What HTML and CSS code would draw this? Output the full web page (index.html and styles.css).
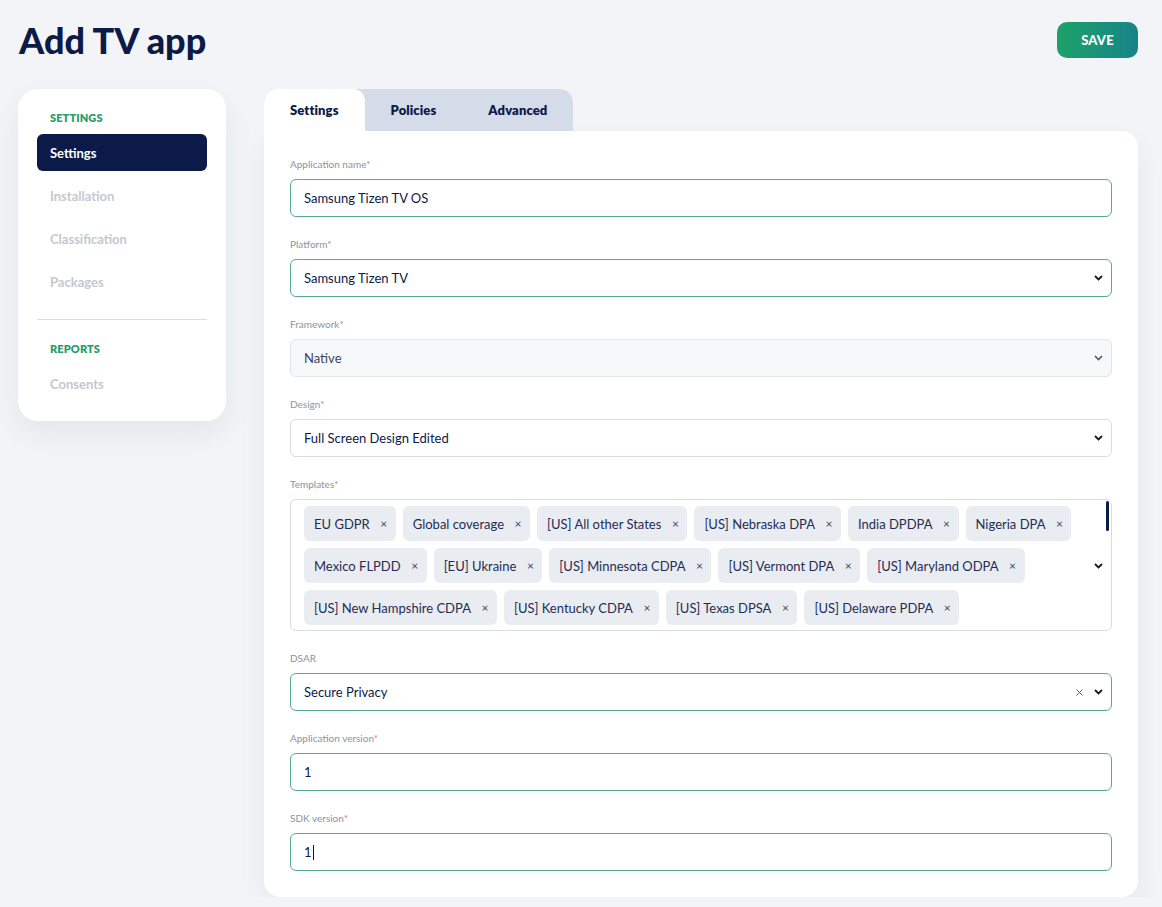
FILE: index.html
```html
<!DOCTYPE html>
<html lang="en">
<head>
  <meta charset="UTF-8">
  <title>Add TV app</title>
  <link rel="stylesheet" href="styles.css">
</head>
<body>

<div class="page">
  <header class="page-header">
    <h1 class="page-title">Add TV app</h1>
    <button class="save-btn">SAVE</button>
  </header>

  <div class="layout">
    <!-- Side navigation -->
    <aside class="side-nav">
      <div class="nav-section">SETTINGS</div>
      <a class="nav-item active">Settings</a>
      <a class="nav-item">Installation</a>
      <a class="nav-item">Classification</a>
      <a class="nav-item">Packages</a>
      <div class="nav-divider"></div>
      <div class="nav-section">REPORTS</div>
      <a class="nav-item">Consents</a>
    </aside>

    <main class="content">
      <div class="tabs">
        <button class="tab active">Settings</button>
        <button class="tab">Policies</button>
        <button class="tab">Advanced</button>
      </div>

      <div class="form-card">
        <div class="field">
          <label class="field-label">Application name<span class="req">*</span></label>
          <div class="control focus">Samsung Tizen TV OS</div>
        </div>

        <div class="field">
          <label class="field-label">Platform<span class="req">*</span></label>
          <div class="control select focus">
            <span class="value">Samsung Tizen TV</span>
            <svg class="chevron" width="9" height="6" viewBox="0 0 9 6"><path d="M1 1l3.5 3.5L8 1" fill="none" stroke="#1b1b1f" stroke-width="1.8"/></svg>
          </div>
        </div>

        <div class="field">
          <label class="field-label">Framework<span class="req">*</span></label>
          <div class="control select disabled">
            <span class="value">Native</span>
            <svg class="chevron" width="9" height="6" viewBox="0 0 9 6"><path d="M1 1l3.5 3.5L8 1" fill="none" stroke="#55575e" stroke-width="1.6"/></svg>
          </div>
        </div>

        <div class="field">
          <label class="field-label">Design<span class="req">*</span></label>
          <div class="control select">
            <span class="value">Full Screen Design Edited</span>
            <svg class="chevron" width="9" height="6" viewBox="0 0 9 6"><path d="M1 1l3.5 3.5L8 1" fill="none" stroke="#1b1b1f" stroke-width="1.8"/></svg>
          </div>
        </div>

        <div class="field">
          <label class="field-label">Templates<span class="req">*</span></label>
          <div class="multi-select">
            <div class="chips">
              <span class="chip">EU GDPR<span class="chip-x">×</span></span>
              <span class="chip">Global coverage<span class="chip-x">×</span></span>
              <span class="chip">[US] All other States<span class="chip-x">×</span></span>
              <span class="chip">[US] Nebraska DPA<span class="chip-x">×</span></span>
              <span class="chip">India DPDPA<span class="chip-x">×</span></span>
              <span class="chip">Nigeria DPA<span class="chip-x">×</span></span>
              <span class="chip">Mexico FLPDD<span class="chip-x">×</span></span>
              <span class="chip">[EU] Ukraine<span class="chip-x">×</span></span>
              <span class="chip">[US] Minnesota CDPA<span class="chip-x">×</span></span>
              <span class="chip">[US] Vermont DPA<span class="chip-x">×</span></span>
              <span class="chip">[US] Maryland ODPA<span class="chip-x">×</span></span>
              <span class="chip">[US] New Hampshire CDPA<span class="chip-x">×</span></span>
              <span class="chip">[US] Kentucky CDPA<span class="chip-x">×</span></span>
              <span class="chip">[US] Texas DPSA<span class="chip-x">×</span></span>
              <span class="chip">[US] Delaware PDPA<span class="chip-x">×</span></span>
            </div>
            <svg class="chevron" width="9" height="6" viewBox="0 0 9 6"><path d="M1 1l3.5 3.5L8 1" fill="none" stroke="#1b1b1f" stroke-width="1.8"/></svg>
            <span class="scroll-thumb"></span>
          </div>
        </div>

        <div class="field">
          <label class="field-label">DSAR</label>
          <div class="control select focus">
            <span class="value">Secure Privacy</span>
            <svg class="clear" width="7" height="7" viewBox="0 0 7 7"><path d="M.5.5l6 6M6.5.5l-6 6" fill="none" stroke="#5b6070" stroke-width="1"/></svg>
            <svg class="chevron" width="9" height="6" viewBox="0 0 9 6"><path d="M1 1l3.5 3.5L8 1" fill="none" stroke="#1b1b1f" stroke-width="1.8"/></svg>
          </div>
        </div>

        <div class="field">
          <label class="field-label">Application version<span class="req">*</span></label>
          <div class="control focus">1</div>
        </div>

        <div class="field">
          <label class="field-label">SDK version<span class="req">*</span></label>
          <div class="control focus">1<span class="caret"></span></div>
        </div>
      </div>
    </main>
  </div>
</div>

</body>
</html>
```

FILE: styles.css
```css
:root {
  --navy: #0b1a47;
  --green: #2a9d6b;
  --focus: #55ad8d;
  --border: #d9dbe2;
  --muted: #c4c8d0;
  --label: #8e929c;
  --chip: #e9ecf1;
  --background: #f2f4f7;
  --surface: #ffffff;
  --font: 'Lato', 'Inter', Arial, sans-serif;
}

body {
  margin: 0;
  background: var(--background);
  color: var(--navy);
  font-family: var(--font);
  font-size: 13px;
}

.page {
  padding: 22px 24px 0 18px;
}

.page-header {
  display: flex;
  align-items: center;
  justify-content: space-between;
}

.page-title {
  margin: 0 0 0 1px;
  font-size: 36px;
  font-weight: 900;
  line-height: 36px;
  color: var(--navy);
}

.save-btn {
  width: 81px;
  height: 36px;
  border: none;
  border-radius: 10px;
  background: linear-gradient(90deg, #1ea168 0%, #17848a 100%);
  color: #fff;
  font-family: var(--font);
  font-weight: 900;
  font-size: 13px;
  letter-spacing: 0.2px;
  cursor: pointer;
}

.layout {
  display: flex;
  align-items: flex-start;
  gap: 38px;
  margin-top: 31px;
}

/* Side navigation */
.side-nav {
  width: 208px;
  box-sizing: border-box;
  flex-shrink: 0;
  background: var(--surface);
  border-radius: 20px;
  padding: 22px 19px 19px;
  box-shadow: 0 12px 30px rgba(30, 40, 70, 0.07);
}

.nav-section {
  margin: 0 0 9px 13px;
  font-size: 11px;
  line-height: 14px;
  font-weight: 800;
  color: var(--green);
  letter-spacing: 0.1px;
}

.nav-item {
  display: flex;
  align-items: center;
  height: 37px;
  padding: 0 13px;
  margin-bottom: 6px;
  border-radius: 6px;
  font-size: 13px;
  font-weight: 700;
  color: var(--muted);
  cursor: pointer;
}
.nav-item:last-child {
  margin-bottom: 0;
}
.nav-item.active {
  background: var(--navy);
  color: #fff;
}

.nav-divider {
  height: 1px;
  background: #d8dbe1;
  margin: 19px 0 22px;
}

/* Content */
.content {
  flex: 1;
}

.tabs {
  display: inline-flex;
  background: #d4dcea;
  border-radius: 14px 14px 0 0;
  vertical-align: top;
}

.tab {
  height: 42px;
  padding: 0 26px;
  border: none;
  background: transparent;
  font-family: var(--font);
  font-size: 13px;
  font-weight: 800;
  letter-spacing: 0.1px;
  color: var(--navy);
  cursor: pointer;
}
.tab.active {
  background: var(--surface);
  border-radius: 14px 12px 0 0;
}

.form-card {
  background: var(--surface);
  border-radius: 0 16px 16px 16px;
  padding: 26px 26px 26px;
  box-shadow: 0 12px 30px rgba(30, 40, 70, 0.06);
}

.field {
  margin-bottom: 20px;
}
.field:last-child {
  margin-bottom: 0;
}

.field-label {
  display: block;
  margin-bottom: 8px;
  font-size: 10px;
  line-height: 14px;
  color: var(--label);
}
.req {
  color: #e0707f;
}

.control {
  display: flex;
  align-items: center;
  height: 38px;
  box-sizing: border-box;
  padding: 0 8px 0 13px;
  border: 1px solid var(--border);
  border-radius: 6px;
  font-size: 13px;
  color: var(--navy);
  background: var(--surface);
}
.control.focus {
  border-color: var(--focus);
}
.control.disabled {
  background: #f7f8fa;
  border-color: #e2e4e9;
  color: #3a4563;
}
.control .value {
  flex: 1;
}
.control .clear {
  margin-right: 11px;
}

.caret {
  display: inline-block;
  width: 1px;
  height: 15px;
  margin-left: 1px;
  background: #111;
}

/* Templates multi select */
.multi-select {
  position: relative;
  display: flex;
  align-items: center;
  box-sizing: border-box;
  padding: 6px 8px 5px 13px;
  border: 1px solid var(--border);
  border-radius: 6px;
}

.chips {
  flex: 1;
  display: flex;
  flex-wrap: wrap;
  gap: 7px;
  padding-right: 16px;
}

.chip {
  display: inline-flex;
  align-items: center;
  height: 35px;
  padding: 0 8px 0 10px;
  border-radius: 6px;
  background: var(--chip);
  font-size: 13px;
  color: #1f2d55;
  white-space: nowrap;
}
.chip-x {
  margin-left: 10px;
  width: 8px;
  text-align: center;
  font-size: 12px;
  color: #3d4866;
}

.scroll-thumb {
  position: absolute;
  top: 1px;
  right: 2px;
  width: 3px;
  height: 30px;
  border-radius: 2px;
  background: var(--navy);
}
```
